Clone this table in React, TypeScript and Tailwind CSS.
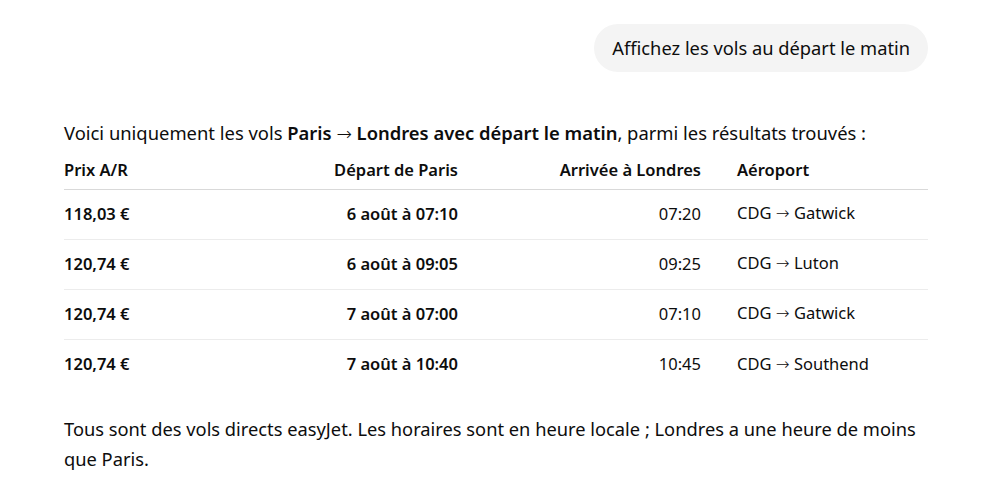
const rows = [
  { price: "118,03 €", dep: "6 août à 07:10", arr: "07:20", to: "Gatwick" },
  { price: "120,74 €", dep: "6 août à 09:05", arr: "09:25", to: "Luton" },
  { price: "120,74 €", dep: "7 août à 07:00", arr: "07:10", to: "Gatwick" },
  { price: "120,74 €", dep: "7 août à 10:40", arr: "10:45", to: "Southend" },
];

const Arrow = () => <span className="font-['DejaVu_Sans'] font-extralight">→</span>;

export default function App() {
  return (
    <div className="min-h-screen bg-white text-[#0d0d0d] font-['Noto_Sans','Open_Sans',sans-serif]">
      <div className="mx-auto w-[864px] pt-6">
        <div className="flex justify-end">
          <div className="rounded-full bg-[#f4f4f4] px-[18px] h-12 flex items-center text-[18.3px]">
            Affichez les vols au départ le matin
          </div>
        </div>

        <p className="mt-[47px] text-[18.4px] leading-[28px]">
          Voici uniquement les vols <b className="font-semibold">Paris <Arrow /> Londres avec départ le matin</b>, parmi les résultats trouvés :
        </p>

        <table className="mt-[10px] w-full table-fixed border-collapse text-[16.5px]">
          <colgroup>
            <col className="w-[215px]" />
            <col className="w-[197px]" />
            <col className="w-[243px]" />
            <col />
          </colgroup>
          <thead>
            <tr className="border-b border-[#d9d9d9]">
              <th className="h-[30px] pb-[6px] text-left font-semibold">Prix A/R</th>
              <th className="pb-[6px] pr-[18px] text-right font-semibold">Départ de Paris</th>
              <th className="pb-[6px] pr-[18px] text-right font-semibold">Arrivée à Londres</th>
              <th className="pb-[6px] pl-[18px] text-left font-semibold">Aéroport</th>
            </tr>
          </thead>
          <tbody>
            {rows.map((r, i) => (
              <tr key={i} className={i < rows.length - 1 ? "border-b border-[#ececec]" : ""}>
                <td className="h-[50px] font-semibold">{r.price}</td>
                <td className="pr-[18px] text-right font-semibold">{r.dep}</td>
                <td className="pr-[18px] text-right">{r.arr}</td>
                <td className="pl-[18px]">
                  CDG <Arrow /> {r.to}
                </td>
              </tr>
            ))}
          </tbody>
        </table>

        <p className="mt-[25px] text-[18.3px] leading-[30px]">
          Tous sont des vols directs easyJet. Les horaires sont en heure locale ; Londres a une heure de moins que Paris.
        </p>
      </div>
    </div>
  );
}
